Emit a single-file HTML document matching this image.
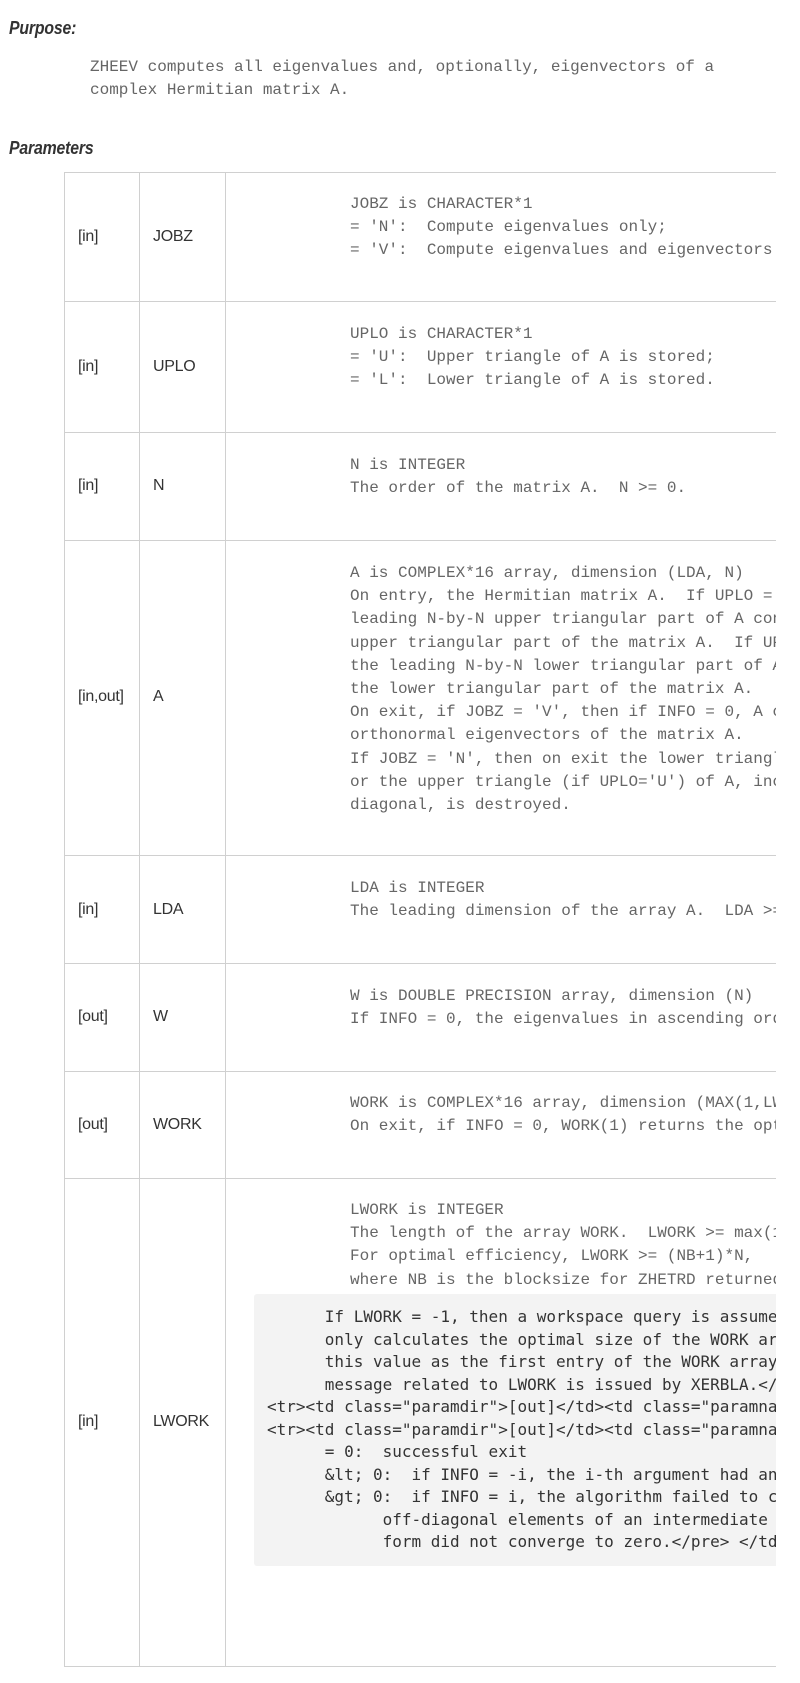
<!DOCTYPE html>
<html><head><meta charset="utf-8"><style>
html,body{margin:0;padding:0}
body{background:#fff;width:800px;height:1683px;position:relative;overflow:hidden;font-family:"Liberation Sans",sans-serif}
#w{position:absolute;left:0;top:0;width:776px;height:1683px;overflow:hidden}
.h{position:absolute;left:9px;font-weight:bold;font-style:italic;font-size:18px;color:#333;line-height:20px;transform:scaleX(0.88);transform-origin:0 0;letter-spacing:-0.2px}
.m{position:absolute;font-family:"Liberation Mono",monospace;font-size:16px;color:#666;white-space:pre;line-height:23.2px}
.l{position:absolute;font-size:16px;color:#333;line-height:20px;letter-spacing:-0.3px}
.hl{position:absolute;left:64px;width:712px;height:1px;background:#d0d0d0}
.vl{position:absolute;top:172px;height:1495px;width:1px;background:#d0d0d0}
.g{position:absolute;left:254px;top:1294px;width:522px;height:272px;background:#f3f3f3;border-radius:3px 0 0 3px;overflow:hidden}
.g pre{margin:0;position:absolute;left:13px;top:12px;font-family:"DejaVu Sans Mono",monospace;font-size:16px;line-height:22.5px;color:#333}
</style></head><body><div id="w">
<div class="h" style="top:18px">Purpose:</div>
<div class="m" style="left:90px;top:56px;line-height:23.4px">ZHEEV computes all eigenvalues and, optionally, eigenvectors of a
complex Hermitian matrix A.</div>
<div class="h" style="top:138px">Parameters</div>
<div class="hl" style="top:172px"></div>
<div class="hl" style="top:301px"></div>
<div class="hl" style="top:432px"></div>
<div class="hl" style="top:540px"></div>
<div class="hl" style="top:855px"></div>
<div class="hl" style="top:963px"></div>
<div class="hl" style="top:1071px"></div>
<div class="hl" style="top:1178px"></div>
<div class="hl" style="top:1666px"></div>
<div class="vl" style="left:64px"></div>
<div class="vl" style="left:139px"></div>
<div class="vl" style="left:225px"></div>

<div class="l" style="left:78px;top:227px">[in]</div><div class="l" style="left:153px;top:227px">JOBZ</div>
<div class="m" style="left:350px;top:193px">JOBZ is CHARACTER*1
= 'N':  Compute eigenvalues only;
= 'V':  Compute eigenvalues and eigenvectors.</div>

<div class="l" style="left:78px;top:357px">[in]</div><div class="l" style="left:153px;top:357px">UPLO</div>
<div class="m" style="left:350px;top:323px">UPLO is CHARACTER*1
= 'U':  Upper triangle of A is stored;
= 'L':  Lower triangle of A is stored.</div>

<div class="l" style="left:78px;top:476px">[in]</div><div class="l" style="left:153px;top:476px">N</div>
<div class="m" style="left:350px;top:454px">N is INTEGER
The order of the matrix A.  N &gt;= 0.</div>

<div class="l" style="left:78px;top:687px">[in,out]</div><div class="l" style="left:153px;top:687px">A</div>
<div class="m" style="left:350px;top:562px">A is COMPLEX*16 array, dimension (LDA, N)
On entry, the Hermitian matrix A.  If UPLO = 'U', the
leading N-by-N upper triangular part of A contains the
upper triangular part of the matrix A.  If UPLO = 'L',
the leading N-by-N lower triangular part of A contains
the lower triangular part of the matrix A.
On exit, if JOBZ = 'V', then if INFO = 0, A contains the
orthonormal eigenvectors of the matrix A.
If JOBZ = 'N', then on exit the lower triangle (if UPLO='L')
or the upper triangle (if UPLO='U') of A, including the
diagonal, is destroyed.</div>

<div class="l" style="left:78px;top:900px">[in]</div><div class="l" style="left:153px;top:900px">LDA</div>
<div class="m" style="left:350px;top:877px">LDA is INTEGER
The leading dimension of the array A.  LDA &gt;= max(1,N).</div>

<div class="l" style="left:78px;top:1007px">[out]</div><div class="l" style="left:153px;top:1007px">W</div>
<div class="m" style="left:350px;top:985px">W is DOUBLE PRECISION array, dimension (N)
If INFO = 0, the eigenvalues in ascending order.</div>

<div class="l" style="left:78px;top:1115px">[out]</div><div class="l" style="left:153px;top:1115px">WORK</div>
<div class="m" style="left:350px;top:1092px">WORK is COMPLEX*16 array, dimension (MAX(1,LWORK))
On exit, if INFO = 0, WORK(1) returns the optimal LWORK.</div>

<div class="l" style="left:78px;top:1412px">[in]</div><div class="l" style="left:153px;top:1412px">LWORK</div>
<div class="m" style="left:350px;top:1199px">LWORK is INTEGER
The length of the array WORK.  LWORK &gt;= max(1,2*N-1).
For optimal efficiency, LWORK &gt;= (NB+1)*N,
where NB is the blocksize for ZHETRD returned by ILAENV.</div>
<div class="g"><pre>      If LWORK = -1, then a workspace query is assumed; the routine
      only calculates the optimal size of the WORK array, returns
      this value as the first entry of the WORK array, and no error
      message related to LWORK is issued by XERBLA.&lt;/pre&gt; &lt;/td&gt;&lt;/tr&gt;
&lt;tr&gt;&lt;td class="paramdir"&gt;[out]&lt;/td&gt;&lt;td class="paramname"&gt;RWORK&lt;/td&gt;
&lt;tr&gt;&lt;td class="paramdir"&gt;[out]&lt;/td&gt;&lt;td class="paramname"&gt;INFO&lt;/td&gt;
      = 0:  successful exit
      &amp;lt; 0:  if INFO = -i, the i-th argument had an illegal value
      &amp;gt; 0:  if INFO = i, the algorithm failed to converge; i
            off-diagonal elements of an intermediate tridiagonal
            form did not converge to zero.&lt;/pre&gt; &lt;/td&gt;&lt;/tr&gt;</pre></div>
</div></body></html>
